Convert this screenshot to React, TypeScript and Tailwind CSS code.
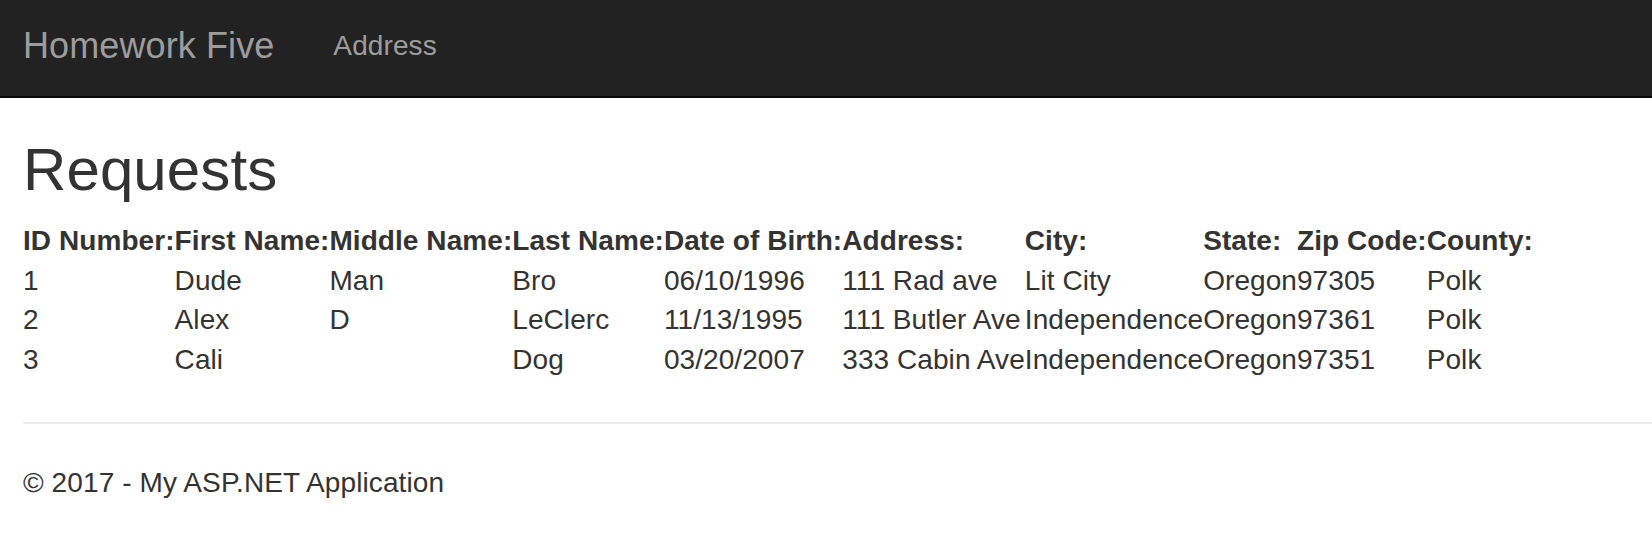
import React from "react";

const rows = [
  ["1", "Dude", "Man", "Bro", "06/10/1996", "111 Rad ave", "Lit City", "Oregon", "97305", "Polk"],
  ["2", "Alex", "D", "LeClerc", "11/13/1995", "111 Butler Ave", "Independence", "Oregon", "97361", "Polk"],
  ["3", "Cali", "", "Dog", "03/20/2007", "333 Cabin Ave", "Independence", "Oregon", "97351", "Polk"],
];

const headers = [
  "ID Number:",
  "First Name:",
  "Middle Name:",
  "Last Name:",
  "Date of Birth:",
  "Address:",
  "City:",
  "State:",
  "Zip Code:",
  "County:",
];

export default function App() {
  return (
    <div className="min-h-screen bg-white text-[#333333] tracking-[0.1px] font-['Liberation_Sans',Arial,sans-serif]">
      <nav className="h-[98px] bg-[#222222] border-b-2 border-[#080808] flex items-start pl-[23px]">
        <a className="pt-[26px] text-[36px] leading-[40px] text-[#9d9d9d] whitespace-nowrap">Homework Five</a>
        <a className="ml-[59px] pt-[26px] text-[28px] leading-[40px] text-[#9d9d9d] whitespace-nowrap">Address</a>
      </nav>
      <div className="pl-[23px]">
        <h2 className="mt-[39px] text-[60px] leading-[66px] font-normal">Requests</h2>
        <table className="mt-[18px] text-[28px] leading-[39.7px] tracking-[0.07px]">
          <thead>
            <tr>
              {headers.map((h) => (
                <th key={h} className="text-left font-bold whitespace-pre p-0">
                  {h}
                </th>
              ))}
            </tr>
          </thead>
          <tbody>
            {rows.map((r) => (
              <tr key={r[0]}>
                {r.map((c, i) => (
                  <td key={i} className="whitespace-nowrap p-0">
                    {c}
                  </td>
                ))}
              </tr>
            ))}
          </tbody>
        </table>
        <hr className="mt-[42px] h-[2px] border-0 bg-[#eeeeee]" />
        <footer className="mt-[39px]">
          <p className="text-[28px] leading-[40px]">© 2017 - My ASP.NET Application</p>
        </footer>
      </div>
    </div>
  );
}
